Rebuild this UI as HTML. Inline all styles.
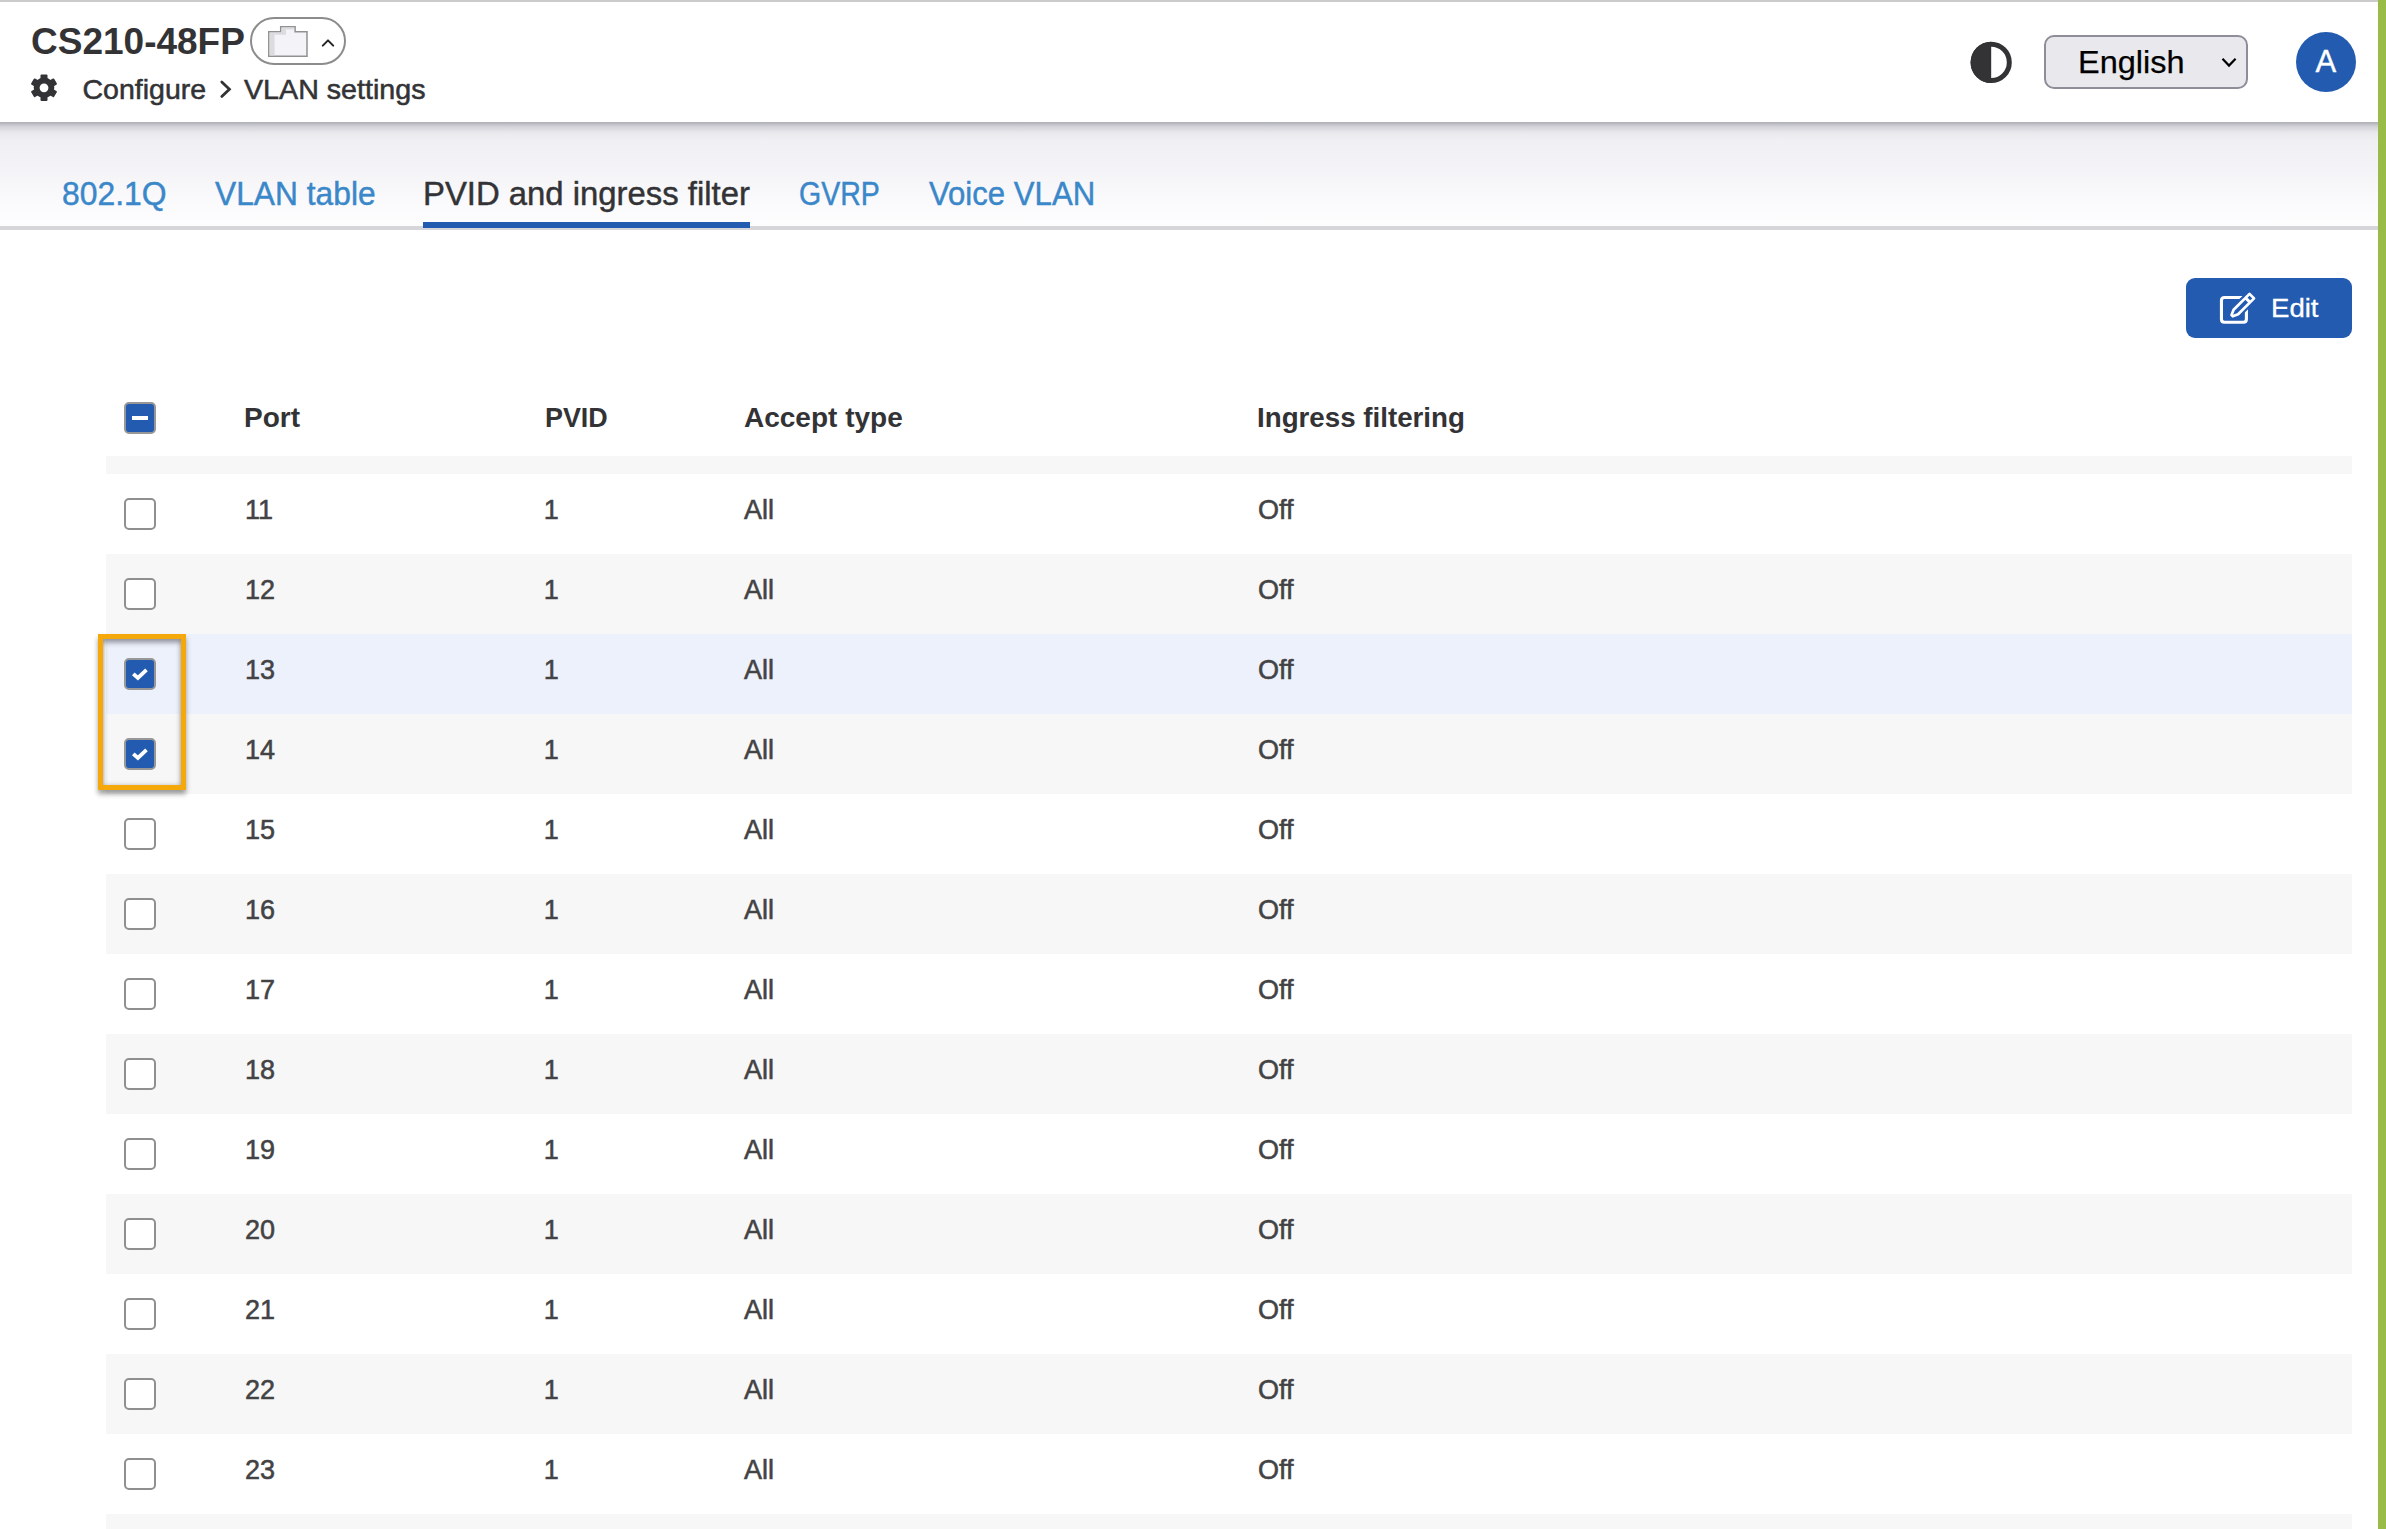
<!DOCTYPE html>
<html><head><meta charset="utf-8">
<style>
html,body{margin:0;padding:0;}
body{width:2386px;height:1529px;position:relative;overflow:hidden;background:#fff;font-family:"Liberation Sans",sans-serif;color:#333336;}
.a{position:absolute;white-space:nowrap;line-height:1;}
#topline{position:absolute;left:0;top:0;width:2378px;height:2px;background:#cbcbcb;}
#green{position:absolute;left:2378px;top:0;width:8px;height:1529px;background:#99bc48;}

#header{position:absolute;left:0;top:2px;width:2378px;height:120px;background:#fff;}
#tabs{position:absolute;left:0;top:122px;width:2378px;height:104px;background:linear-gradient(#eeeef2 0%,#f2f2f6 35%,#fafafc 75%,#fdfdfe 100%);}
#tabshadow{position:absolute;left:0;top:122px;width:2378px;height:18px;background:linear-gradient(rgba(120,120,130,.55),rgba(150,150,160,.32) 25%,rgba(190,190,200,.12) 60%,rgba(240,240,244,0));}
#tabborder{position:absolute;left:0;top:226px;width:2378px;height:4px;background:#d6d5da;}
.tab{position:absolute;top:177.5px;font-size:32.5px;line-height:1;color:#3a87c9;white-space:nowrap;-webkit-text-stroke:0.45px #3a87c9;}
.tab.act{color:#333336;-webkit-text-stroke:0.45px #333336;}
#uline{position:absolute;left:423px;top:222px;width:327px;height:6px;background:#235bb0;}
.row{position:absolute;left:106px;width:2246px;height:80px;}
.g{background:#f7f7f7;}
.hl{background:#edf1fb;}
.cb{position:absolute;left:124px;width:28px;height:28px;border:2px solid #8f8f8f;border-radius:5px;background:#fff;}
.cb.on{background:#235bb0;border-color:#979797;}
.cell{position:absolute;font-size:27px;line-height:1;color:#434345;white-space:nowrap;-webkit-text-stroke:0.55px #434345;}
.hd{position:absolute;top:404px;font-size:28px;font-weight:bold;line-height:1;color:#333336;white-space:nowrap;}
</style></head>
<body>
<div id="header"></div>
<div id="topline"></div>
<div id="tabs"></div>
<div id="tabshadow"></div>
<div id="tabborder"></div>
<div id="green"></div>

<!-- title -->
<div class="a" style="left:31px;top:23.2px;font-size:37px;font-weight:bold;color:#333336;">CS210-48FP</div>
<div style="position:absolute;left:250px;top:17px;width:92px;height:43.6px;border:2px solid #8c8c8c;border-radius:24px;"></div>
<svg style="position:absolute;left:266px;top:24px" width="72" height="36" viewBox="266 24 72 36">
  <path d="M268.8 56.2 V31.8 H280.7 V26.8 H295.1 V31.8 H307 V56.2 Z" fill="#f4f4f8" stroke="#919191" stroke-width="1.5"/>
  <rect x="269.6" y="32.6" width="5" height="22.8" fill="#dcdcdf"/>
  <path d="M269.6 32.6 H281.5 V27.6 H294.3 V29.6 H286 V34.7 H274.6 V32.6 Z" fill="#dcdcdf"/>
  <path d="M322.8 45.6 L328 40.4 L333.2 45.6" fill="none" stroke="#222" stroke-width="2" stroke-linecap="round" stroke-linejoin="round"/>
</svg>

<!-- gear + breadcrumb -->
<svg style="position:absolute;left:29px;top:73px" width="30" height="30" viewBox="0 0 30 30">
  <g transform="translate(15 14.8)" fill="#333336">
    <circle r="10.3"/>
    <rect x="-3.5" y="-13.3" width="7" height="26.6" rx="1"/>
    <rect x="-3.5" y="-13.3" width="7" height="26.6" rx="1" transform="rotate(60)"/>
    <rect x="-3.5" y="-13.3" width="7" height="26.6" rx="1" transform="rotate(120)"/>
    <circle r="4.4" fill="#fff"/>
  </g>
</svg>
<div class="a" style="left:82.5px;top:74.9px;font-size:28.5px;color:#333336;-webkit-text-stroke:0.55px #333336;">Configure</div>
<svg style="position:absolute;left:216px;top:80px" width="20" height="22" viewBox="216 80 20 22">
  <path d="M221.8 82 L229.4 89.2 L221.8 96.4" fill="none" stroke="#333336" stroke-width="2.8" stroke-linecap="round" stroke-linejoin="miter"/>
</svg>
<div class="a" style="left:243.5px;top:74.9px;font-size:28.5px;color:#333336;-webkit-text-stroke:0.55px #333336;transform:scaleX(1.005);transform-origin:0 0;">VLAN settings</div>

<!-- right header -->
<svg style="position:absolute;left:1968px;top:39px" width="46" height="46" viewBox="1968 39 46 46">
  <circle cx="1991.2" cy="62.4" r="18.1" fill="none" stroke="#333336" stroke-width="5"/>
  <path d="M1991.2 41.8 A20.6 20.6 0 0 0 1991.2 83 Z" fill="#333336"/>
</svg>
<div style="position:absolute;left:2044px;top:35px;width:200px;height:50px;border:2px solid #8e8e9a;border-radius:10px;background:#e9e9ed;"></div>
<div class="a" style="left:2078px;top:45.9px;font-size:32px;color:#000;-webkit-text-stroke:0.25px #000;transform:scaleX(1.015);transform-origin:0 0;">English</div>
<svg style="position:absolute;left:2218px;top:54px" width="22" height="18" viewBox="2218 54 22 18">
  <path d="M2222.5 58.8 L2229 65.6 L2235.6 58.8" fill="none" stroke="#000" stroke-width="2.2"/>
</svg>
<div style="position:absolute;left:2296px;top:32px;width:60px;height:60px;border-radius:50%;background:#235bb0;"></div>
<div class="a" style="left:2315.5px;top:45.9px;font-size:31px;color:#fff;-webkit-text-stroke:0.4px #fff;">A</div>

<!-- tabs -->
<div class="tab" style="left:62px;transform:scaleX(0.98);transform-origin:0 0;">802.1Q</div>
<div class="tab" style="left:215px;transform:scaleX(0.977);transform-origin:0 0;">VLAN table</div>
<div class="tab act" style="left:423px;transform:scaleX(1.011);transform-origin:0 0;">PVID and ingress filter</div>
<div class="tab" style="left:799px;transform:scaleX(0.877);transform-origin:0 0;">GVRP</div>
<div class="tab" style="left:928.7px;transform:scaleX(0.958);transform-origin:0 0;">Voice VLAN</div>
<div id="uline"></div>

<!-- edit button -->
<div style="position:absolute;left:2186px;top:278px;width:166px;height:60px;border-radius:9px;background:#235bb0;"></div>
<svg style="position:absolute;left:2214px;top:288px" width="50" height="40" viewBox="2214 288 50 40">
  <path d="M2243 297.5 H2224.5 Q2221.45 297.5 2221.45 300.5 V319.3 Q2221.45 322.3 2224.5 322.3 H2243.4 Q2246.4 322.3 2246.4 319.3 V306" fill="none" stroke="#fff" stroke-width="3.1"/>
  <g transform="translate(2252.7 295.2) rotate(45)">
    <path d="M-3.2 1.3 H3.2 V23.8 L0.9 29 L-0.9 29 L-3.2 23.8 Z" fill="#235bb0" stroke="#235bb0" stroke-width="7" stroke-linejoin="round"/>
    <path d="M-3.2 1.3 H3.2 V23.8 L0.9 29 L-0.9 29 L-3.2 23.8 Z" fill="none" stroke="#fff" stroke-width="2.7" stroke-linejoin="round"/>
    <path d="M-3.2 6.9 H3.2" stroke="#fff" stroke-width="3"/>
  </g>
</svg>
<div class="a" style="left:2271px;top:294.7px;font-size:26.5px;color:#fff;-webkit-text-stroke:0.3px #fff;transform:scaleX(1.04);transform-origin:0 0;">Edit</div>

<!-- table header -->
<div class="cb on" style="top:402px;"><div style="position:absolute;left:6px;top:12px;width:16px;height:4px;background:#fff;"></div></div>
<div class="hd" style="left:244px;">Port</div>
<div class="hd" style="left:544.5px;transform:scaleX(0.96);transform-origin:0 0;">PVID</div>
<div class="hd" style="left:744px;">Accept type</div>
<div class="hd" style="left:1257px;transform:scaleX(0.99);transform-origin:0 0;">Ingress filtering</div>

<div class="row g" style="top:456px;height:18px;"></div>
<div id="rows">
<div class="row" style="top:474px;height:80px;"></div>
<div class="cb" style="top:498px;"></div>
<div class="cell" style="left:245px;top:497px;">11</div>
<div class="cell" style="left:543.7px;top:497px;">1</div>
<div class="cell" style="left:744px;top:497px;">All</div>
<div class="cell" style="left:1258px;top:497px;">Off</div>
<div class="row g" style="top:554px;height:80px;"></div>
<div class="cb" style="top:578px;"></div>
<div class="cell" style="left:245px;top:577px;">12</div>
<div class="cell" style="left:543.7px;top:577px;">1</div>
<div class="cell" style="left:744px;top:577px;">All</div>
<div class="cell" style="left:1258px;top:577px;">Off</div>
<div class="row hl" style="top:634px;height:80px;"></div>
<div class="cb on" style="top:658px;"><svg style="position:absolute;left:0;top:0" width="28" height="28" viewBox="0 0 28 28"><path d="M7.3 13.8 L11.9 18 L20.5 9.9" fill="none" stroke="#fff" stroke-width="3.8"/></svg></div>
<div class="cell" style="left:245px;top:657px;">13</div>
<div class="cell" style="left:543.7px;top:657px;">1</div>
<div class="cell" style="left:744px;top:657px;">All</div>
<div class="cell" style="left:1258px;top:657px;">Off</div>
<div class="row g" style="top:714px;height:80px;"></div>
<div class="cb on" style="top:738px;"><svg style="position:absolute;left:0;top:0" width="28" height="28" viewBox="0 0 28 28"><path d="M7.3 13.8 L11.9 18 L20.5 9.9" fill="none" stroke="#fff" stroke-width="3.8"/></svg></div>
<div class="cell" style="left:245px;top:737px;">14</div>
<div class="cell" style="left:543.7px;top:737px;">1</div>
<div class="cell" style="left:744px;top:737px;">All</div>
<div class="cell" style="left:1258px;top:737px;">Off</div>
<div class="row" style="top:794px;height:80px;"></div>
<div class="cb" style="top:818px;"></div>
<div class="cell" style="left:245px;top:817px;">15</div>
<div class="cell" style="left:543.7px;top:817px;">1</div>
<div class="cell" style="left:744px;top:817px;">All</div>
<div class="cell" style="left:1258px;top:817px;">Off</div>
<div class="row g" style="top:874px;height:80px;"></div>
<div class="cb" style="top:898px;"></div>
<div class="cell" style="left:245px;top:897px;">16</div>
<div class="cell" style="left:543.7px;top:897px;">1</div>
<div class="cell" style="left:744px;top:897px;">All</div>
<div class="cell" style="left:1258px;top:897px;">Off</div>
<div class="row" style="top:954px;height:80px;"></div>
<div class="cb" style="top:978px;"></div>
<div class="cell" style="left:245px;top:977px;">17</div>
<div class="cell" style="left:543.7px;top:977px;">1</div>
<div class="cell" style="left:744px;top:977px;">All</div>
<div class="cell" style="left:1258px;top:977px;">Off</div>
<div class="row g" style="top:1034px;height:80px;"></div>
<div class="cb" style="top:1058px;"></div>
<div class="cell" style="left:245px;top:1057px;">18</div>
<div class="cell" style="left:543.7px;top:1057px;">1</div>
<div class="cell" style="left:744px;top:1057px;">All</div>
<div class="cell" style="left:1258px;top:1057px;">Off</div>
<div class="row" style="top:1114px;height:80px;"></div>
<div class="cb" style="top:1138px;"></div>
<div class="cell" style="left:245px;top:1137px;">19</div>
<div class="cell" style="left:543.7px;top:1137px;">1</div>
<div class="cell" style="left:744px;top:1137px;">All</div>
<div class="cell" style="left:1258px;top:1137px;">Off</div>
<div class="row g" style="top:1194px;height:80px;"></div>
<div class="cb" style="top:1218px;"></div>
<div class="cell" style="left:245px;top:1217px;">20</div>
<div class="cell" style="left:543.7px;top:1217px;">1</div>
<div class="cell" style="left:744px;top:1217px;">All</div>
<div class="cell" style="left:1258px;top:1217px;">Off</div>
<div class="row" style="top:1274px;height:80px;"></div>
<div class="cb" style="top:1298px;"></div>
<div class="cell" style="left:245px;top:1297px;">21</div>
<div class="cell" style="left:543.7px;top:1297px;">1</div>
<div class="cell" style="left:744px;top:1297px;">All</div>
<div class="cell" style="left:1258px;top:1297px;">Off</div>
<div class="row g" style="top:1354px;height:80px;"></div>
<div class="cb" style="top:1378px;"></div>
<div class="cell" style="left:245px;top:1377px;">22</div>
<div class="cell" style="left:543.7px;top:1377px;">1</div>
<div class="cell" style="left:744px;top:1377px;">All</div>
<div class="cell" style="left:1258px;top:1377px;">Off</div>
<div class="row" style="top:1434px;height:80px;"></div>
<div class="cb" style="top:1458px;"></div>
<div class="cell" style="left:245px;top:1457px;">23</div>
<div class="cell" style="left:543.7px;top:1457px;">1</div>
<div class="cell" style="left:744px;top:1457px;">All</div>
<div class="cell" style="left:1258px;top:1457px;">Off</div>
<div class="row g" style="top:1514px;height:15px;"></div>
<div style="position:absolute;left:98px;top:634px;width:78px;height:146px;border:5px solid #f5a80a;box-shadow:0 4px 5px rgba(0,0,0,.38), inset 0 4px 5px rgba(70,70,78,.45), inset 0 0 5px rgba(70,70,80,.28);"></div>
</div>
</body></html>
